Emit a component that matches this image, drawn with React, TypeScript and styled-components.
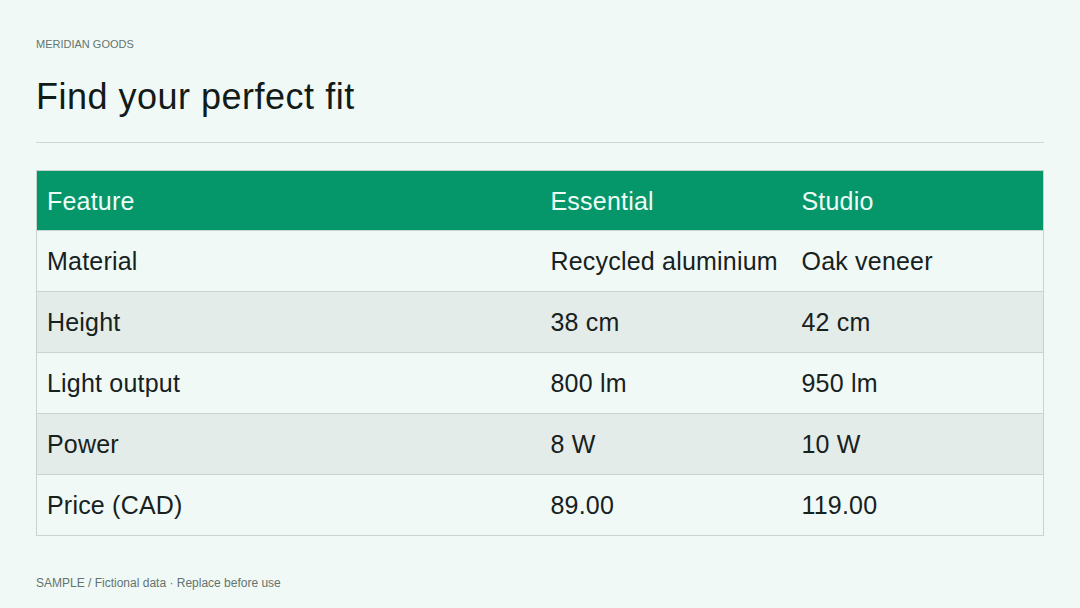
import React from 'react';
import styled, { createGlobalStyle } from 'styled-components';

const GlobalStyle = createGlobalStyle`
	* { box-sizing: border-box; }
	html, body { margin: 0; padding: 0; background: #f0f9f6; }
	body { font-family: 'Liberation Sans', Arial, sans-serif; }
`;

const Page = styled.div`
	width: 1080px;
	height: 608px;
	padding: 37px 36px 0;
	display: flex;
	flex-direction: column;
	background: #f0f9f6;
	color: #17211d;
	overflow: hidden;
`;

const Brand = styled.div`
	font-size: 11px;
	line-height: 14px;
	color: #66746f;
	text-transform: uppercase;
`;

const Title = styled.h1`
	margin: 24px 0 0;
	font-size: 36px;
	line-height: 44px;
	font-weight: 400;
	color: #121b18;
	letter-spacing: 0.5px;
`;

const Divider = styled.hr`
	margin: 23px 0 0;
	border: 0;
	border-top: 1px solid #cdd6d2;
	height: 0;
`;

const Table = styled.table`
	margin-top: 27px;
	width: 100%;
	border-collapse: collapse;
	table-layout: fixed;
	font-size: 25px;
	letter-spacing: 0.2px;
	border: 1px solid #c9d3cf;
`;

const HeadRow = styled.tr`
	background: #05966a;
	color: #eefcf6;
`;

const Row = styled.tr<{ $alt: boolean }>`
	background: ${(p) => (p.$alt ? '#e4ece9' : '#f0f9f6')};
	border-top: 1px solid #c9d3cf;
`;

const Th = styled.th`
	height: 60px;
	padding: 1px 10px 0;
	text-align: left;
	font-weight: 400;
	white-space: nowrap;
`;

const Td = styled.td`
	height: 61px;
	padding: 1px 10px 0;
	white-space: nowrap;
	color: #17211d;
`;

const Footer = styled.div`
	margin-top: 39px;
	font-size: 12px;
	line-height: 16px;
	color: #64736e;
`;

const rows = [
	['Material', 'Recycled aluminium', 'Oak veneer'],
	['Height', '38 cm', '42 cm'],
	['Light output', '800 lm', '950 lm'],
	['Power', '8 W', '10 W'],
	['Price (CAD)', '89.00', '119.00'],
];

export default function App() {
	return (
		<>
			<GlobalStyle />
			<Page>
				<Brand>Meridian Goods</Brand>
				<Title>Find your perfect fit</Title>
				<Divider />
				<Table>
					<colgroup>
						<col style={{ width: 504 }} />
						<col style={{ width: 251 }} />
						<col />
					</colgroup>
					<thead>
						<HeadRow>
							<Th>Feature</Th>
							<Th>Essential</Th>
							<Th>Studio</Th>
						</HeadRow>
					</thead>
					<tbody>
						{rows.map((r, i) => (
							<Row key={r[0]} $alt={i % 2 === 1}>
								{r.map((c) => (
									<Td key={c}>{c}</Td>
								))}
							</Row>
						))}
					</tbody>
				</Table>
				<Footer>SAMPLE / Fictional data · Replace before use</Footer>
			</Page>
		</>
	);
}
